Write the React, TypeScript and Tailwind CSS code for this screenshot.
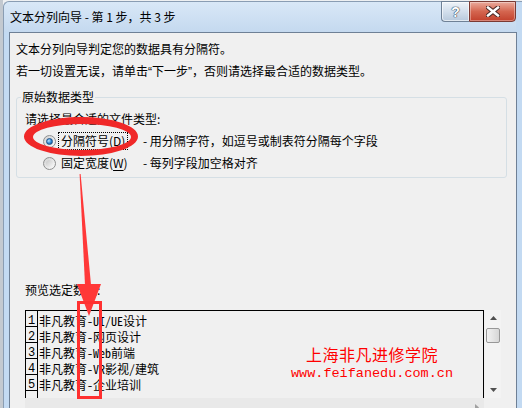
import React from "react";

const ui = "font-['Noto_Sans_CJK_SC',sans-serif]";
const mono = "font-['Noto_Sans_Mono_CJK_SC','Liberation_Mono','Noto_Sans_CJK_SC',monospace]";

const rows = [
  "非凡教育-UI/UE设计",
  "非凡教育-网页设计",
  "非凡教育-Web前端",
  "非凡教育-VR影视/建筑",
  "非凡教育-企业培训",
];

const Radio = ({ checked }: { checked?: boolean }) => (
  <span className="ml-[18px] w-[13px] h-[13px] shrink-0 rounded-full border border-[#8e8f8f] bg-gradient-to-br from-[#d2d2d2] to-[#fbfbfb] flex items-center justify-center">
    {checked ? (
      <span className="w-[7px] h-[7px] rounded-full border border-[#1d4f86] bg-[radial-gradient(circle_at_35%_35%,#b9e4ff,#2a84d0_55%,#0f4a8a)]" />
    ) : (
      <span className="w-[7px] h-[7px] rounded-full bg-gradient-to-br from-[#c8c8c8] to-[#f6f6f6]" />
    )}
  </span>
);

const Quote = ({ c }: { c: string }) => (
  <span className="font-['Liberation_Sans',sans-serif]">{c}</span>
);

export default function App() {
  return (
    <div className={`relative w-[522px] h-[408px] overflow-hidden bg-[#eef0f2] flex text-[12px] text-black ${ui}`}>
      {/* sheet behind the dialog */}
      <div className="w-[3px] shrink-0 bg-[#c3c9d0]" />

      {/* window */}
      <div className="mt-[1px] w-[525px] h-[420px] shrink-0 flex flex-col rounded-tl-[6px] border-l border-t border-[#8a9db3] bg-[#c3daf2]">
        <div className="h-[30px] shrink-0 w-[512px] flex items-center pl-[6px] bg-gradient-to-b from-[#d9e8f7] to-[#c4d9ef] rounded-tl-[6px]">
          <span className="leading-[16px] whitespace-pre">文本分列向导 - 第 1 步，共 3 步</span>
          <div className="ml-auto self-start -mt-[1px] flex">
            <div className="w-[28px] h-[21px] rounded-bl-[4px] border border-[#6f8196] border-r-0 bg-gradient-to-b from-[#eef3f9] via-[#d3dfec] to-[#b8c9dc] flex items-center justify-center shadow-[inset_0_0_0_1px_rgba(255,255,255,0.6)]">
              <span className="font-['Liberation_Sans',sans-serif] font-bold text-[14px] leading-none text-white [text-shadow:0_0_1px_#2e3f55,0_0_1px_#2e3f55,0_0_1px_#2e3f55]">?</span>
            </div>
            <div className="w-[47px] h-[21px] rounded-br-[4px] border border-[#7b3a33] bg-gradient-to-b from-[#e9aa9c] via-[#d4654f] to-[#c2402c] flex items-center justify-center shadow-[inset_0_0_0_1px_rgba(255,255,255,0.35)]">
              <svg width="14" height="11" viewBox="0 0 14 11">
                <path d="M2 1.5L12 9.5M12 1.5L2 9.5" stroke="#4a2a26" strokeWidth="4.5" strokeLinecap="square" />
                <path d="M2 1.5L12 9.5M12 1.5L2 9.5" stroke="#ffffff" strokeWidth="2.4" strokeLinecap="square" />
              </svg>
            </div>
          </div>
        </div>

        {/* client area */}
        <div className="ml-[5px] w-[508px] flex-1 min-h-0 overflow-hidden border-l border-t border-r border-[#6e8096] bg-[#f0f0f0] pl-[6px] pt-[6px] flex flex-col">
          <p className="leading-[20px]">文本分列向导判定您的数据具有分隔符。</p>
          <p className="mt-[2px] leading-[20px]">
            若一切设置无误，请单击<Quote c="“" />下一步<Quote c="”" />，否则请选择最合适的数据类型。
          </p>

          <fieldset className="mt-[7px] w-[491px] border border-[#d5dfe5] rounded-[3px] pb-[3px]">
            <legend className="ml-[4px] px-[1px] leading-[16px]">原始数据类型</legend>
            <div className="pl-[8px]">
              <p className="mt-[4px] leading-[20px]">请选择最合适的文件类型:</p>
              <div className="mt-[1px] h-[22px] flex items-center whitespace-nowrap">
                <Radio checked />
                <span className="ml-[2px] w-[70px] h-[18px] shrink-0 border border-dotted border-black px-[2px] leading-[16px]">
                  分隔符号(<span className="underline underline-offset-2">D</span>)
                </span>
                <span className="ml-[15px]">- 用分隔字符，如逗号或制表符分隔每个字段</span>
              </div>
              <div className="h-[22px] flex items-center whitespace-nowrap">
                <Radio />
                <span className="ml-[2px] w-[70px] h-[18px] shrink-0 border border-transparent px-[2px] leading-[16px]">
                  固定宽度(<span className="underline underline-offset-2">W</span>)
                </span>
                <span className="ml-[15px]">- 每列字段加空格对齐</span>
              </div>
            </div>
          </fieldset>

          <p className="mt-[102px] ml-[9px] leading-[20px]">预览选定数据:</p>

          <div className="mt-[10px] ml-[9px] flex flex-col shrink-0">
            <div className="flex">
              <div className={`relative w-[459px] h-[88px] border-l border-t border-r border-black bg-[#f0f0f0] flex flex-col ${mono}`}>
                {rows.map((r, i) => (
                  <div key={r} className="h-[16px] shrink-0 flex">
                    <span className="w-[12px] shrink-0 border-r border-b border-black text-center leading-[20px] font-['Liberation_Mono',monospace] text-[12px]">
                      {i + 1}
                    </span>
                    <span className="pl-[1px] leading-[20px] whitespace-pre">{r}</span>
                  </div>
                ))}
                <div className="flex-1 w-[12px] border-r border-black" />

                <div className="absolute left-[262px] top-[33px] w-[168px] flex flex-col items-center text-[#ff0000]">
                  <span className={`text-[16px] leading-[20px] tracking-[0.5px] ${ui}`}>上海非凡进修学院</span>
                  <span className="text-[13.5px] leading-[20px] font-['Liberation_Mono',monospace]">www.feifanedu.com.cn</span>
                </div>
              </div>

              {/* vertical scrollbar */}
              <div className="ml-[1px] w-[16px] h-[88px] bg-[#f3f3f3] flex flex-col items-center">
                <svg width="9" height="16" viewBox="0 0 9 16">
                  <path d="M1 10L4.5 6L8 10Z" fill="#505050" />
                </svg>
                <div className="mt-[2px] w-[14px] h-[15px] rounded-[2px] border border-[#979797] bg-gradient-to-r from-[#f2f2f2] to-[#d6d6d6]" />
                <div className="flex-1" />
                <svg width="9" height="16" viewBox="0 0 9 16">
                  <path d="M1 6L8 6L4.5 10Z" fill="#505050" />
                </svg>
              </div>
            </div>

            {/* horizontal scrollbar */}
            <div className="w-[459px] h-[17px] bg-[#e9e9e9] flex justify-end pr-[3px] pt-[5px]">
              <svg width="8" height="9" viewBox="0 0 8 9">
                <path d="M2 1L6 4.5L2 8Z" fill="#a0a0a0" />
              </svg>
            </div>
          </div>
        </div>
      </div>

      {/* red annotations */}
      <svg className="absolute inset-0 pointer-events-none" width="522" height="408" viewBox="0 0 522 408">
        <path
          fillRule="evenodd"
          fill="#f02828"
          d="M24 136.5a57 19.5 0 1 0 114 0a57 19.5 0 1 0 -114 0Z M33 137a49 13 0 1 0 98 0a49 13 0 1 0 -98 0Z"
        />
        <path d="M79.6 174L80.6 174L91 285L85 285Z" fill="#ff3838" />
        <path d="M77 284L101 284L89 316Z" fill="#ff3838" />
        <rect x="78.5" y="302.5" width="22" height="95" fill="none" stroke="#ff3030" strokeWidth="3" />
      </svg>
    </div>
  );
}
